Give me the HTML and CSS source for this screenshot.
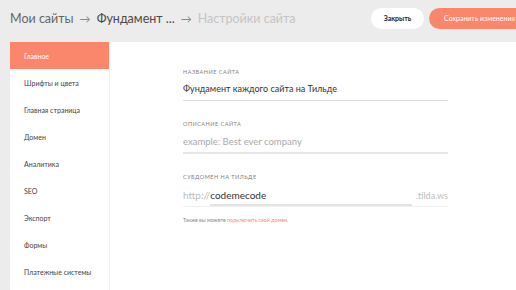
FILE: index.html
```html
<!DOCTYPE html>
<html lang="ru">
<head>
<meta charset="utf-8">
<link rel="stylesheet" href="styles.css">
</head>
<body>
<header class="top">
  <nav class="crumbs">
    <span class="crumb">Мои сайты</span>
    <span class="arrow">→</span>
    <span class="crumb strong">Фундамент ...</span>
    <span class="arrow">→</span>
    <span class="crumb current">Настройки сайта</span>
  </nav>
  <div class="actions">
    <button class="btn btn-close">Закрыть</button>
    <button class="btn btn-save">Сохранить изменения</button>
  </div>
</header>
<div class="main">
  <aside class="side">
    <div class="item active">Главное</div>
    <div class="item">Шрифты и цвета</div>
    <div class="item">Главная страница</div>
    <div class="item">Домен</div>
    <div class="item">Аналитика</div>
    <div class="item">SEO</div>
    <div class="item">Экспорт</div>
    <div class="item">Формы</div>
    <div class="item">Платежные системы</div>
  </aside>
  <section class="content">
    <div class="field">
      <div class="label">Название сайта</div>
      <div class="input">Фундамент каждого сайта на Тильде</div>
    </div>
    <div class="field">
      <div class="label">Описание сайта</div>
      <div class="input placeholder thick">example: Best ever company</div>
    </div>
    <div class="field">
      <div class="label">Субдомен на Тильде</div>
      <div class="sub">
        <span class="pre">http://</span>
        <span class="val">codemecode</span>
        <span class="post">.tilda.ws</span>
      </div>
      <div class="note">Также вы можете <span class="link">подключить свой домен.</span></div>
    </div>
  </section>
</div>
</body>
</html>
```

FILE: styles.css
```css
* { box-sizing: border-box; margin: 0; padding: 0; }
html, body { height: 100%; }
body {
  background: #ececec;
  font-family: "Lato", "Noto Sans", sans-serif;
  color: #333;
  overflow: hidden;
}
.top {
  height: 42px;
  display: flex;
  align-items: center;
  justify-content: space-between;
  padding-left: 10px;
}
.crumbs {
  display: flex;
  align-items: center;
  gap: 6px;
  font-size: 12.5px;
  color: #666;
  margin-top: -6px;
  white-space: nowrap;
}
.strong { color: #4a4a4a; }
.arrow { color: #888; font-size: 11px; }
.current { color: #c4c4c4; }
.actions {
  display: flex;
  gap: 5px;
  margin-top: -6px;
  margin-right: -14px;
}
.btn {
  border: none;
  height: 21px;
  border-radius: 11px;
  font-family: inherit;
  font-size: 7px;
}
.btn-close {
  background: #fff;
  color: #222;
  width: 53px;
  font-weight: 700;
}
.btn-save {
  background: #fa876b;
  color: #fff;
  width: 101px;
  text-align: center;
}
.main {
  display: flex;
  height: calc(100% - 42px);
  padding-left: 10px;
}
.side {
  width: 100px;
  background: #fff;
  border-right: 1px solid #efefef;
}
.item {
  height: 27px;
  display: flex;
  align-items: center;
  padding-left: 14px;
  font-size: 7px;
  color: #444;
}
.item.active {
  background: #fa876b;
  color: #fff;
}
.content {
  flex: 1;
  background: #fff;
  padding: 26px 0 0 73px;
}
.field {
  width: 265px;
  margin-bottom: 19px;
}
.label {
  font-size: 5.5px;
  line-height: 8px;
  letter-spacing: 0.5px;
  text-transform: uppercase;
  color: #808080;
  height: 8px;
}
.input {
  font-size: 9px;
  line-height: 12px;
  color: #333;
  padding: 7px 0 5px;
  border-bottom: 1px solid #dcdcdc;
}
.input.placeholder { color: #aaa; font-size: 9.5px; padding: 8px 0 4px; }
.input.thick { border-bottom: 2px solid #e6e6e6; }
.sub {
  display: flex;
  align-items: baseline;
  font-size: 10px;
  line-height: 12px;
  padding: 8px 0 4px;
  border-bottom: 1px solid #f0f0f0;
}
.pre { color: #bbb; }
.val { color: #333; flex: 1; border-bottom: 2px solid #e4e4e4; margin-bottom: -5px; padding-bottom: 3px; }
.post { color: #c0c0c0; padding-left: 4px; font-size: 9px; }
.note {
  margin-top: 10px;
  font-size: 5.3px;
  color: #888;
}
.link { color: #fa876b; }
```
